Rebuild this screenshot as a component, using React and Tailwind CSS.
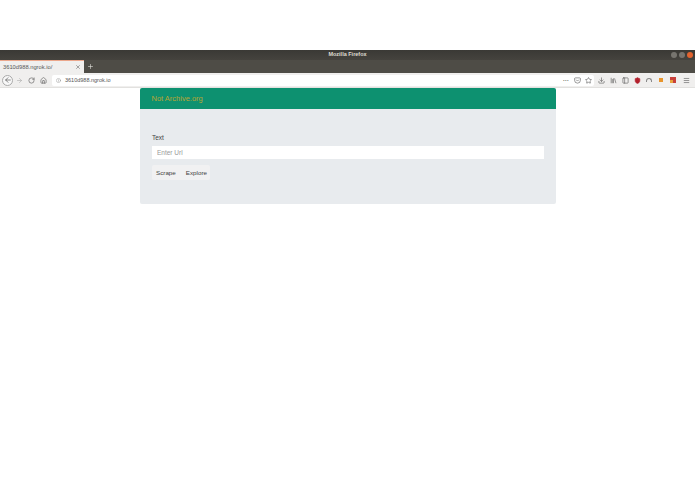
import { ArrowLeft, ArrowRight, RotateCw, Home, Info, Star, Download, Library, PanelLeft, Menu, Shield, Plus, X, Pocket } from "lucide-react";

function Toolbar() {
    return (
        <div className="flex h-[15px] items-center bg-[#f0efee] border-b border-[#e2e1df] text-[#555]">
            <div className="ml-[2px] flex h-[11px] w-[11px] items-center justify-center rounded-full border border-[#aaa] bg-[#f8f8f8]">
                <ArrowLeft size={8} strokeWidth={2} />
            </div>
            <ArrowRight size={7} strokeWidth={2} className="ml-[2.5px] text-[#aaa]" />
            <RotateCw size={7} strokeWidth={2} className="ml-[5px]" />
            <Home size={7} strokeWidth={2} className="ml-[5px]" />
            <div className="ml-[5.5px] flex h-[11px] w-[542px] items-center rounded-[2px] bg-white">
                <Info size={5} className="ml-[4px] text-[#888]" />
                <span className="ml-[4px] text-[5.5px] leading-[11px] text-[#555]">3610d988.ngrok.io</span>
                <span className="ml-auto text-[6px] leading-[11px] font-bold">···</span>
                <Pocket size={7} className="ml-[4.5px]" />
                <Star size={7} className="ml-[4px] mr-[2.5px]" />
            </div>
            <Download size={7} className="ml-[3.5px]" />
            <Library size={7} className="ml-[5px]" />
            <PanelLeft size={7} className="ml-[5px]" />
            <Shield size={7} className="ml-[5px] fill-[#b3202c] text-[#b3202c]" />
            <div className="ml-[5px] h-[4px] w-[6px] rounded-t-full border border-b-0 border-[#888]" />
            <div className="ml-[7px] h-[4px] w-[4px] bg-[#e8952c]" />
            <div className="ml-[7px] flex h-[6px] w-[6px] items-end bg-[#c8403a]">
                <div className="h-[3px] w-[3px] bg-[#e8a33c]" />
            </div>
            <Menu size={7} className="ml-[7.5px]" />
        </div>
    );
}

export default function App() {
    return (
        <div className="min-h-[494px] bg-white font-['Liberation_Sans','Open_Sans',sans-serif]">
            <div className="h-[50px]" />

            {/* title bar */}
            <div className="relative flex h-[10px] items-center justify-center bg-gradient-to-b from-[#3a3935] to-[#45433e]">
                <span className="text-[5.5px] font-bold leading-none text-[#dfdbd2]">Mozilla Firefox</span>
                <div className="absolute right-[2px] top-[2px] flex gap-[2px]">
                    <div className="h-[6px] w-[6px] rounded-full bg-[#77756f]" />
                    <div className="h-[6px] w-[6px] rounded-full bg-[#77756f]" />
                    <div className="h-[6px] w-[6px] rounded-full bg-[#e2632f]" />
                </div>
            </div>

            {/* tab bar */}
            <div className="flex h-[13px] items-end bg-[#4e4c46]">
                <div className="flex h-[13px] w-[84px] items-center border-t border-[#eba78c] bg-[#f0efee] px-[3px] text-[#555]">
                    <span className="text-[5.75px] leading-[12px]">3610d988.ngrok.io/</span>
                    <X size={6} className="ml-auto" />
                </div>
                <Plus size={7} strokeWidth={2} className="mb-[3px] ml-[3px] text-[#e5e3df]" />
            </div>

            <Toolbar />

            {/* page */}
            <div className="ml-[139.5px] w-[416px] overflow-hidden rounded-[2px] bg-[#e8ebee]">
                <div className="flex h-[21px] items-center bg-[#0d9170] px-[12px]">
                    <span className="text-[7.5px] leading-none text-[#b8a535]">Not Archive.org</span>
                </div>
                <div className="h-[95px] px-[12.5px] pt-[25px]">
                    <label className="block text-[6.5px] leading-[8px] text-[#444]" htmlFor="url">Text</label>
                    <input
                        id="url"
                        className="mt-[4px] block h-[13px] w-[392px] bg-white px-[5px] text-[6.5px] placeholder:text-[#999]"
                        placeholder="Enter Url"
                        type="text"
                    />
                    <div className="mt-[6px] flex h-[15px] w-[58px] items-center rounded-[2px] bg-[#f1f1f2] pl-[4px] text-[6.25px] text-[#444]">
                        <span>Scrape</span>
                        <span className="ml-[10px]">Explore</span>
                    </div>
                </div>
            </div>
        </div>
    );
}
